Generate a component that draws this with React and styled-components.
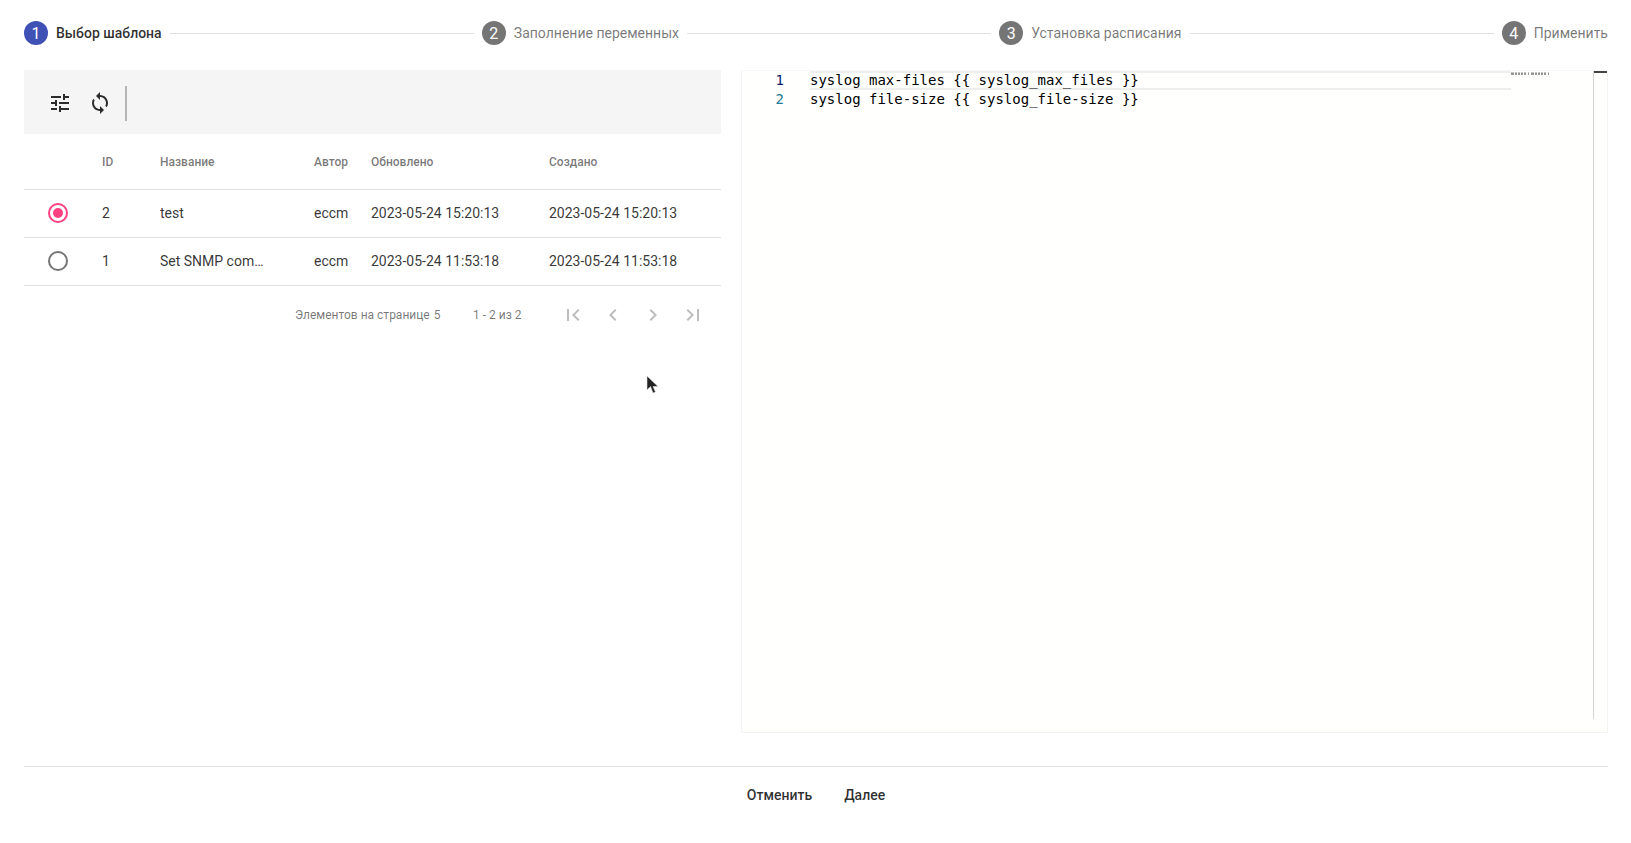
import React from "react";
import styled, { createGlobalStyle } from "styled-components";

const Global = createGlobalStyle`
  html, body { margin: 0; padding: 0; background: #fff; height: 100%; overflow: hidden; }
  body { font-family: Roboto, "Liberation Sans", sans-serif; }
  * { box-sizing: border-box; }
`;

const Page = styled.div`
  position: relative;
  width: 1631px;
  height: 843px;
  padding: 0 23px 0 24px;
  display: flex;
  flex-direction: column;
`;

const Stepper = styled.div`
  height: 70px;
  display: flex;
  align-items: center;
  padding-bottom: 4px;
`;

const Step = styled.div`
  display: flex;
  align-items: center;
  gap: 8px;
  font-size: 14px;
  font-weight: ${(p) => (p.$active ? 500 : 400)};
  color: ${(p) => (p.$active ? "rgba(0,0,0,.82)" : "rgba(0,0,0,.54)")};
  white-space: nowrap;
`;

const StepNum = styled.span`
  width: 24px;
  height: 24px;
  border-radius: 50%;
  background: ${(p) => (p.$active ? "#3f51b5" : "rgba(0,0,0,.54)")};
  color: #fff;
  font-size: 16px;
  font-weight: 400;
  display: flex;
  align-items: center;
  justify-content: center;
`;

const StepLine = styled.div`
  flex: 1;
  height: 1px;
  margin: 0 8px;
  background: rgba(0,0,0,.12);
`;

const Content = styled.div`
  display: grid;
  grid-template-columns: 697px 867px;
  column-gap: 20px;
  height: 663px;
`;

const Left = styled.div`
  display: flex;
  flex-direction: column;
`;

const Toolbar = styled.div`
  height: 64px;
  background: #f5f5f5;
  display: flex;
  align-items: center;
  padding: 2px 0 0 16px;
`;

const ToolIcon = styled.button`
  width: 40px;
  height: 40px;
  padding: 0;
  border: 0;
  background: none;
  display: flex;
  align-items: center;
  justify-content: center;
  color: rgba(0,0,0,.82);
`;

const ToolDivider = styled.div`
  width: 2px;
  height: 35px;
  margin-left: 5px;
  background: rgba(0,0,0,.26);
`;

const Table = styled.table`
  width: 697px;
  border-collapse: collapse;
  table-layout: fixed;
`;

const Th = styled.th`
  height: 55px;
  padding: 2px 0 0;
  text-align: left;
  font-size: 12px;
  font-weight: 500;
  color: rgba(0,0,0,.54);
  border-bottom: 1px solid rgba(0,0,0,.12);
`;

const Td = styled.td`
  height: 48px;
  padding: 0;
  font-size: 14px;
  color: rgba(0,0,0,.8);
  border-bottom: 1px solid rgba(0,0,0,.12);
  white-space: nowrap;
`;

const NameText = styled.div`
  width: 104px;
  overflow: hidden;
  text-overflow: ellipsis;
`;

const Radio = styled.span`
  display: flex;
  align-items: center;
  justify-content: center;
  width: 20px;
  height: 20px;
  margin-left: 24px;
  border-radius: 50%;
  border: 2px solid ${(p) => (p.$checked ? "#ff4081" : "rgba(0,0,0,.54)")};
`;

const RadioDot = styled.span`
  width: 10px;
  height: 10px;
  border-radius: 50%;
  background: #ff4081;
`;

const Paginator = styled.div`
  height: 56px;
  display: flex;
  align-items: center;
  font-size: 12px;
  color: rgba(0,0,0,.54);
  padding: 2px 0 0 271px;
`;

const PageSize = styled.span`
  width: 178px;
  display: flex;
  gap: 4px;
  white-space: nowrap;
`;

const Range = styled.span`
  width: 80px;
  white-space: nowrap;
`;

const PageIcons = styled.div`
  display: flex;
`;

const PageBtn = styled.span`
  width: 40px;
  height: 40px;
  display: flex;
  align-items: center;
  justify-content: center;
  color: rgba(0,0,0,.26);
`;

const Editor = styled.div`
  position: relative;
  background: #fffffe;
  border: 1px solid #f3f3f3;
  border-top-color: #f8f8f8;
  overflow: hidden;
`;

const CodeLines = styled.div`
  font-family: "DejaVu Sans Mono", "Liberation Mono", monospace;
  font-size: 14px;
  line-height: 19px;
`;

const CodeLine = styled.div`
  display: flex;
  height: 19px;
  width: 769px;
  white-space: pre;
  color: #000;
`;

const CodeText = styled.span`
  flex: 1;
  box-shadow: ${(p) => (p.$current ? "inset 0 2px #eeeeee, inset 0 -2px #eeeeee" : "none")};
`;

const LineNo = styled.span`
  width: 42px;
  flex: none;
  text-align: right;
  color: ${(p) => (p.$current ? "#0b216f" : "#237893")};
  margin-right: 26px;
`;

const Minimap = styled.svg`
  position: absolute;
  left: 769px;
  top: 0;
`;

const Ruler = styled.div`
  position: absolute;
  right: 13px;
  top: 0;
  bottom: 13px;
  width: 1px;
  background: #d4d4d4;
`;

const RulerMark = styled.div`
  position: absolute;
  right: 0;
  top: 0;
  width: 13px;
  height: 2px;
  background: #444;
`;

const Footer = styled.div`
  margin-top: 33px;
  border-top: 1px solid rgba(0,0,0,.12);
  height: 56px;
  display: flex;
  align-items: center;
  justify-content: center;
  gap: 32px;
`;

const FootBtn = styled.button`
  border: 0;
  background: none;
  padding: 0;
  font-family: inherit;
  font-size: 14px;
  font-weight: 500;
  color: rgba(0,0,0,.82);
`;

const Cursor = styled.svg`
  position: absolute;
  left: 646px;
  top: 375px;
`;

const steps = ["Выбор шаблона", "Заполнение переменных", "Установка расписания", "Применить"];

const rows = [
  { id: 2, name: "test", author: "eccm", updated: "2023-05-24 15:20:13", created: "2023-05-24 15:20:13", checked: true },
  { id: 1, name: "Set SNMP community", author: "eccm", updated: "2023-05-24 11:53:18", created: "2023-05-24 11:53:18" },
];

const Icon = ({ d, size = 24 }) => (
  <svg width={size} height={size} viewBox="0 0 24 24" fill="currentColor"><path d={d} /></svg>
);

const TUNE = "M3 17v2h6v-2H3zM3 5v2h10V5H3zm10 16v-2h8v-2h-8v-2h-2v6h2zM7 9v2H3v2h4v2h2V9H7zm14 4v-2H11v2h10zm-6-4h2V7h4V5h-4V3h-2v6z";
const SYNC = "M12 4V1L8 5l4 4V6c3.31 0 6 2.69 6 6 0 1.01-.25 1.97-.7 2.8l1.46 1.46C19.54 15.03 20 13.57 20 12c0-4.42-3.58-8-8-8zm0 14c-3.31 0-6-2.69-6-6 0-1.01.25-1.97.7-2.8L5.24 7.74C4.46 8.97 4 10.43 4 12c0 4.42 3.58 8 8 8v3l4-4-4-4v3z";
const FIRST = "M18.41 16.59L13.82 12l4.59-4.59L17 6l-6 6 6 6zM6 6h2v12H6z";
const PREV = "M15.41 7.41L14 6l-6 6 6 6 1.41-1.41L10.83 12z";
const NEXT = "M10 6L8.59 7.41 13.17 12l-4.58 4.59L10 18l6-6z";
const LAST = "M5.59 7.41L10.18 12l-4.59 4.59L7 18l6-6-6-6zM16 6h2v12h-2z";

const miniDots = [0,1,2,4,5,7,8,10,11,13,14,17,20,21,22,24,25,27,28,30,31,33,34,37];

export default function App() {
  return (
    <Page>
      <Global />
      <Stepper>
        {steps.map((s, i) => (
          <React.Fragment key={s}>
            <Step $active={i === 0}>
              <StepNum $active={i === 0}>{i + 1}</StepNum>
              {s}
            </Step>
            {i < steps.length - 1 && <StepLine />}
          </React.Fragment>
        ))}
      </Stepper>
      <Content>
        <Left>
          <Toolbar>
            <ToolIcon><Icon d={TUNE} /></ToolIcon>
            <ToolIcon><Icon d={SYNC} /></ToolIcon>
            <ToolDivider />
          </Toolbar>
          <Table>
            <colgroup>
              <col width="78" /><col width="58" /><col width="154" /><col width="57" /><col width="178" /><col width="172" />
            </colgroup>
            <thead>
              <tr>
                <Th /><Th>ID</Th><Th>Название</Th><Th>Автор</Th><Th>Обновлено</Th><Th>Создано</Th>
              </tr>
            </thead>
            <tbody>
              {rows.map((r) => (
                <tr key={r.id}>
                  <Td><Radio $checked={r.checked}>{r.checked && <RadioDot />}</Radio></Td>
                  <Td>{r.id}</Td>
                  <Td><NameText>{r.name}</NameText></Td>
                  <Td>{r.author}</Td>
                  <Td>{r.updated}</Td>
                  <Td>{r.created}</Td>
                </tr>
              ))}
            </tbody>
          </Table>
          <Paginator>
            <PageSize><span>Элементов на странице</span><span>5</span></PageSize>
            <Range>1 - 2 из 2</Range>
            <PageIcons>
              {[FIRST, PREV, NEXT, LAST].map((d) => (
                <PageBtn key={d}><Icon d={d} /></PageBtn>
              ))}
            </PageIcons>
          </Paginator>
        </Left>
        <Editor>
          <CodeLines>
            <CodeLine>
              <LineNo $current>1</LineNo>
              <CodeText $current>syslog max-files {"{{"} syslog_max_files {"}}"}</CodeText>
            </CodeLine>
            <CodeLine>
              <LineNo>2</LineNo>
              <CodeText>syslog file-size {"{{"} syslog_file-size {"}}"}</CodeText>
            </CodeLine>
          </CodeLines>
          <Minimap width="40" height="6" viewBox="0 0 40 6">
            {miniDots.map((x) => (
              <rect key={x} x={x} y="1.4" width="0.9" height="2.6" fill="#8c8c8c" />
            ))}
          </Minimap>
          <Ruler />
          <RulerMark />
        </Editor>
      </Content>
      <Footer>
        <FootBtn>Отменить</FootBtn>
        <FootBtn>Далее</FootBtn>
      </Footer>
      <Cursor width="14" height="20" viewBox="0 0 14 20">
        <path d="M1 1v14l3.5-3.5L7 18l2.5-1-2.5-5.5h5z" fill="#222" stroke="#ddd" strokeWidth="0.6" />
      </Cursor>
    </Page>
  );
}
